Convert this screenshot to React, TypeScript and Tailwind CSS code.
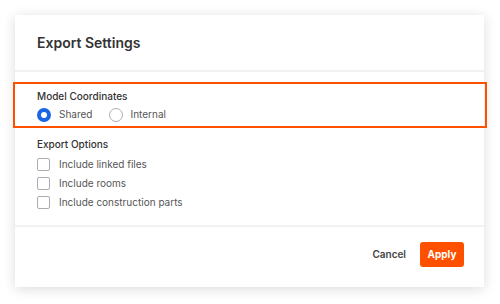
import React from "react";

const Radio = ({ checked, label }: { checked?: boolean; label: string }) => (
  <label className="flex items-center gap-[8px]">
    {checked ? (
      <span className="w-[14px] h-[14px] rounded-full border-[4px] border-[#1b66e4] bg-white" />
    ) : (
      <span className="w-[14px] h-[14px] rounded-full border border-[#a9adb3] bg-white" />
    )}
    <span className="text-[10px] text-[#555]">{label}</span>
  </label>
);

const Checkbox = ({ label }: { label: string }) => (
  <label className="flex items-center gap-[9px] h-[19px]">
    <span className="w-[13px] h-[13px] rounded-[2px] border border-[#a9adb3] bg-white" />
    <span className="text-[10px] text-[#555]">{label}</span>
  </label>
);

export default function App() {
  return (
    <div className="w-[500px] h-[304px] bg-white pt-[15px] pl-[15px] font-['Inter',sans-serif]">
      <div className="w-[469px] h-[272px] bg-white shadow-[0_2px_12px_rgba(0,0,0,0.14)] flex flex-col">
        <header className="h-[57px] px-[22px] flex items-center border-b-2 border-[#f2f2f2]">
          <h1 className="text-[14px] font-semibold text-[#333]">Export Settings</h1>
        </header>

        <main className="flex-1 pt-[10px] flex flex-col">
          <div className="-mx-[2px] mr-[-3px] h-[46px] border-[2.5px] border-[#ff5000] pl-[22px] pt-[4px]">
            <div className="text-[10px] font-medium text-[#333] leading-[16px]">Model Coordinates</div>
            <div className="flex items-center gap-[16px] mt-[3px]">
              <Radio checked label="Shared" />
              <Radio label="Internal" />
            </div>
          </div>

          <div className="px-[22px] pt-[8px]">
            <div className="text-[10px] font-medium text-[#333] leading-[16px] mb-[3px]">Export Options</div>
            <Checkbox label="Include linked files" />
            <Checkbox label="Include rooms" />
            <Checkbox label="Include construction parts" />
          </div>
        </main>

        <footer className="h-[62px] border-t-2 border-[#f2f2f2] flex items-start justify-end gap-[14px] pt-[15px] pr-[20px]">
          <button className="h-[25px] text-[10px] font-semibold text-[#444]">Cancel</button>
          <button className="h-[25px] w-[44px] rounded-[3px] bg-[#ff5000] text-[10px] font-bold text-white">Apply</button>
        </footer>
      </div>
    </div>
  );
}
